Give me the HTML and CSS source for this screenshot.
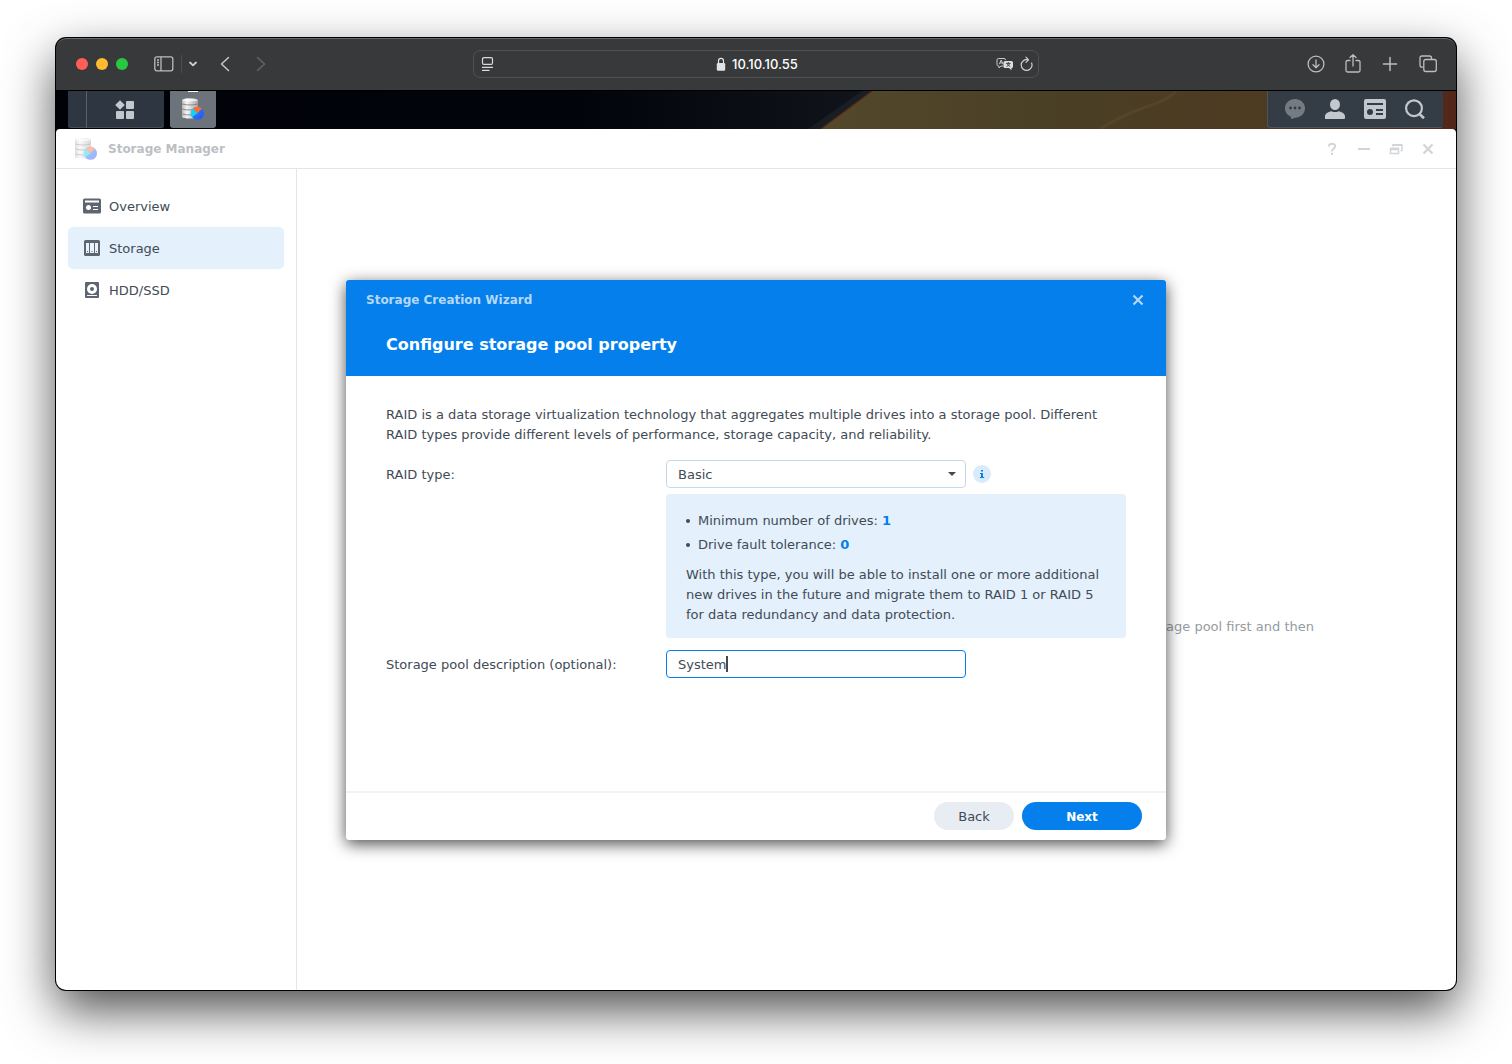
FILE: index.html
```html
<!DOCTYPE html>
<html lang="en">
<head>
<meta charset="utf-8">
<title>Storage Manager</title>
<link rel="stylesheet" href="styles.css">
</head>
<body>
<svg class="defs" aria-hidden="true">
  <defs>
    <linearGradient id="disk" x1="0" x2="1" y1="0" y2="0">
      <stop offset="0" stop-color="#b9b9b9"/><stop offset=".3" stop-color="#f4f4f4"/><stop offset="1" stop-color="#a6a6a6"/>
    </linearGradient>
    <linearGradient id="pie" x1="0" x2="1" y1="0" y2="1">
      <stop offset="0" stop-color="#3b86ff"/><stop offset="1" stop-color="#1d55f0"/>
    </linearGradient>
    <symbol id="storage-manager" viewBox="0 0 22 22">
      <path d="M0 2C0-.2 16-.2 16 2V5.500C16 6 15.600 6.300 15.600 6.500C15.600 6.700 16 7 16 7.500V10.500C16 11 15.600 11.300 15.600 11.500C15.600 11.700 16 12 16 12.500V19C16 21 0 21 0 19V12.500C0 12 .4 11.700.4 11.500C.4 11.300 0 11 0 10.500V7.500C0 7 .4 6.700.4 6.500C.4 6.300 0 6 0 5.500Z" fill="url(#disk)"/>
      <ellipse cx="8" cy="2.200" rx="7.500" ry="1.200" fill="#fff" opacity=".7"/>
      <path d="M.2 5.800C2 7.300 14 7.300 15.800 5.800M.2 10.800C2 12.300 14 12.300 15.800 10.800M.2 15.800C2 17.300 14 17.300 15.800 15.800" fill="none" stroke="#777" stroke-width=".8"/>
      <circle cx="15.500" cy="15.300" r="6.500" fill="url(#pie)"/>
      <path d="M15.500 15.300L11 10.600A6.500 6.500 0 0 0 10.100 19Z" fill="#12d3f3"/>
      <path d="M15.500 15.300L11 10.600A6.500 6.500 0 0 1 19.800 10.400Z" fill="#ff6d2d"/>
    </symbol>
    <symbol id="panel" viewBox="0 0 22 20">
      <path fill-rule="evenodd" d="M2 0H20Q22 0 22 2V18Q22 20 20 20H2Q0 20 0 18V2Q0 0 2 0ZM3 4V6H19V4ZM6 10A3 3 0 1 0 6 16A3 3 0 1 0 6 10ZM12 10V12H19V10ZM12 14V16H19V14Z"/>
    </symbol>
  </defs>
</svg>

<div class="browser">
  <header class="toolbar">
    <div class="toolbar-left">
      <div class="lights"><i class="red"></i><i class="yellow"></i><i class="green"></i></div>
      <button class="tool" aria-label="Sidebar"><svg width="20" height="16" viewBox="0 0 20 16" fill="none" stroke="#bdbdbe" stroke-width="1.300"><rect x=".8" y=".8" width="18" height="14" rx="2"/><path d="M7 1V15M3 4H5M3 6.500H5M3 9H5"/></svg></button>
      <button class="tool drop" aria-label="Tab groups"><svg width="10" height="6" viewBox="0 0 10 6" fill="none" stroke="#d0d0d1" stroke-width="1.800" stroke-linecap="round" stroke-linejoin="round"><path d="M2 1.500L5 4.300L8 1.500"/></svg></button>
      <button class="tool" aria-label="Back page"><svg width="10" height="16" viewBox="0 0 10 16" fill="none" stroke="#c8c8c9" stroke-width="1.500" stroke-linecap="round" stroke-linejoin="round"><path d="M8.500 1.500L1.500 8L8.500 14.500"/></svg></button>
      <button class="tool forward" aria-label="Forward page"><svg width="10" height="16" viewBox="0 0 10 16" fill="none" stroke="#626364" stroke-width="1.500" stroke-linecap="round" stroke-linejoin="round"><path d="M1.500 1.500L8.500 8L1.500 14.500"/></svg></button>
    </div>
    <div class="address">
      <svg width="13" height="16" viewBox="0 0 13 16" fill="none" stroke="#dadadb" stroke-width="1.200" stroke-linecap="round"><rect x="1.500" y="1.600" width="10" height="6.800" rx="1.500"/><path d="M1.500 11.400H11.500M1.500 14.400H8"/></svg>
      <div class="address-host">
        <svg width="10" height="14" viewBox="0 0 10 14"><path d="M2.500 6.500V4A2.500 2.700 0 0 1 7.500 4V6.500" fill="none" stroke="#e2e2e2" stroke-width="1.200"/><rect x=".8" y="6" width="8.400" height="7.800" rx="1.200" fill="#e2e2e2"/></svg>
        <span>10.10.10.55</span>
      </div>
      <div class="address-tools">
        <svg width="18" height="14" viewBox="0 0 18 14"><path d="M7.500 9H5L3 11V9H2.500Q1 9 1 7.500V3Q1 1.500 2.500 1.500H8Q9.500 1.500 9.500 3" fill="none" stroke="#c9c9ca"/><path d="M3.300 7.300L5.200 3L7.100 7.300M4 5.900H6.500" fill="none" stroke="#c9c9ca"/><path d="M9 4H15.500Q17 4 17 5.500V9.500Q17 11 15.500 11V13.200L13 11H9Q7.500 11 7.500 9.500V5.500Q7.500 4 9 4Z" fill="#dedede"/><path d="M10 6.400H14.600M12.300 5V6.400M10.500 9.500Q13 8.800 13.800 6.500M11 6.500Q12 8.800 14.200 9.500" fill="none" stroke="#38393a" stroke-width=".9"/></svg>
        <svg width="13" height="16" viewBox="0 0 13 16" fill="none" stroke="#d0d0d1" stroke-width="1.200" stroke-linecap="round" stroke-linejoin="round"><path d="M11.600 7A5.400 5.400 0 1 1 7.500 3.700M6 1.200L8.500 3.800L6 6.300"/></svg>
      </div>
    </div>
    <div class="toolbar-right">
      <button class="tool" aria-label="Downloads"><svg width="18" height="18" viewBox="0 0 18 18" fill="none" stroke="#bdbdbe" stroke-width="1.300" stroke-linecap="round" stroke-linejoin="round"><circle cx="9" cy="9" r="7.900"/><path d="M9 5V12.500M6 9.800L9 12.700L12 9.800"/></svg></button>
      <button class="tool" aria-label="Share"><svg width="18" height="20" viewBox="0 0 18 20" fill="none" stroke="#bdbdbe" stroke-width="1.300" stroke-linecap="round" stroke-linejoin="round"><path d="M6 6.500H3.500Q2 6.500 2 8V16.500Q2 18 3.500 18H14.500Q16 18 16 16.500V8Q16 6.500 14.500 6.500H12M9 12V1M6 3.600L9 .8L12 3.600"/></svg></button>
      <button class="tool" aria-label="New tab"><svg width="18" height="18" viewBox="0 0 18 18" stroke="#bdbdbe" stroke-width="1.500" stroke-linecap="round"><path d="M9 2.500V15.500M2.500 9H15.500"/></svg></button>
      <button class="tool" aria-label="Tab overview"><svg width="20" height="18" viewBox="0 0 20 18" fill="none" stroke="#bdbdbe" stroke-width="1.300"><path d="M5.500 12.200H4Q2 12.200 2 10.200V3Q2 1 4 1H11.500Q13.500 1 13.500 3V4.500"/><rect x="5.800" y="4.500" width="12.500" height="12" rx="2"/></svg></button>
    </div>
  </header>

  <nav class="taskbar">
    <svg class="wallpaper" viewBox="0 0 1400 38" preserveAspectRatio="none" aria-hidden="true">
      <defs>
        <linearGradient id="night" x1="0" x2="1" y1="0" y2="0"><stop offset="0" stop-color="#010208"/><stop offset=".6" stop-color="#02040c"/><stop offset="1" stop-color="#14171d"/></linearGradient>
        <linearGradient id="sand" x1="0" x2="1" y1="0" y2="0"><stop offset="0" stop-color="#54482b"/><stop offset=".35" stop-color="#4a4026"/><stop offset=".7" stop-color="#4d3a21"/><stop offset="1" stop-color="#522719"/></linearGradient>
      </defs>
      <rect width="870" height="38" fill="url(#night)"/>
      <path d="M806 0L752 38H765L816 0Z" fill="#20262b" opacity=".6"/>
      <path d="M816 0H1400V38H765Z" fill="url(#sand)"/>
      <path d="M816 0L765 38" stroke="#5a2716" stroke-width="1.200"/>
      <path d="M1044 38Q1066 24 1090 16T1120 0" fill="none" stroke="#665433" opacity=".35" stroke-width="3"/>
    </svg>
    <div class="menu-group">
      <button class="menu-button" aria-label="Main menu"><svg width="20" height="20" viewBox="0 0 20 20" fill="#c3c8cf"><path d="M5 .2L9.800 5L5 9.800L.2 5Z"/><rect x="11" y="1" width="8" height="8" rx="1"/><rect x="1" y="11" width="8" height="8" rx="1"/><rect x="11" y="11" width="8" height="8" rx="1"/></svg></button>
    </div>
    <button class="app-button" aria-label="Storage Manager"><svg width="22" height="22"><use href="#storage-manager"/></svg></button>
    <div class="tray">
      <button aria-label="Chat"><svg width="20" height="20" viewBox="0 0 20 20"><path d="M10 0C15.600 0 20 4 20 9.200C20 14 16 18 11.500 18.500L6 20V17.700C2.400 16.300 0 13 0 9.200C0 4 4.400 0 10 0Z" fill="#747b83"/><g fill="#343c45"><circle cx="5.500" cy="9" r="1.400"/><circle cx="10" cy="9" r="1.400"/><circle cx="14.500" cy="9" r="1.400"/></g></svg></button>
      <button aria-label="Account"><svg width="20" height="20" viewBox="0 0 20 20" fill="#c3c8cf"><path d="M10 0A5 5.500 0 0 1 10 11A5 5.500 0 0 1 10 0ZM0 20V17.500C0 14.500 3 13 6.500 12.200Q10 14 13.500 12.200C17 13 20 14.500 20 17.500V19Q20 20 19 20Z"/></svg></button>
      <button aria-label="Widgets"><svg width="22" height="20" fill="#c3c8cf"><use href="#panel"/></svg></button>
      <button aria-label="Search"><svg width="20" height="20" viewBox="0 0 20 20" fill="none" stroke="#c3c8cf" stroke-width="2.200"><circle cx="9" cy="9.200" r="7.900"/><path d="M14.500 15L19 19.300" stroke-width="2.600"/></svg></button>
    </div>
  </nav>

  <div class="app">
    <div class="app-title">
      <svg class="faded" width="22" height="22"><use href="#storage-manager"/></svg>
      <span class="app-name">Storage Manager</span>
      <div class="app-controls">
        <button aria-label="Help"><svg width="14" height="14" viewBox="0 0 14 14" fill="none" stroke="#d2d5d8" stroke-width="2"><path d="M3.800 4.500C3.800.8 10.200.8 10.200 4.300C10.200 6.500 7 6.500 7 9.500"/><path d="M7 10.800V13"/></svg></button>
        <button aria-label="Minimize"><svg width="14" height="14" viewBox="0 0 14 14" stroke="#d2d5d8" stroke-width="2"><path d="M1 7H13"/></svg></button>
        <button aria-label="Restore"><svg width="14" height="14" viewBox="0 0 14 14" fill="none" stroke="#d2d5d8"><path d="M4 4.500V3H13V8.500H11.500" stroke-width="1.500"/><path d="M3.500 3H13" stroke-width="2"/><path d="M1 7H10" stroke-width="2.500"/><rect x="1.500" y="6.500" width="8" height="5" stroke-width="1.500"/></svg></button>
        <button aria-label="Close window"><svg width="14" height="14" viewBox="0 0 14 14" stroke="#d2d5d8" stroke-width="2.200"><path d="M2.500 2.500L11.500 11.500M11.500 2.500L2.500 11.500"/></svg></button>
      </div>
    </div>
    <div class="app-body">
      <aside class="sidebar">
        <a class="side-item" href="#overview"><svg width="18" height="16" viewBox="0 0 18 16"><path d="M1.500.5H16.500Q18 .5 18 2V14Q18 15.500 16.500 15.500H1.500Q0 15.500 0 14V2Q0 .5 1.500.5Z" fill="#5d6670"/><path d="M2 2.500H16V4.500H2ZM10 8H15V9H10ZM10 11H15V12H10Z" fill="#fff"/><circle cx="5.500" cy="9.500" r="2.500" fill="#fff"/></svg>Overview</a>
        <a class="side-item current" href="#storage"><svg width="18" height="16" viewBox="0 0 18 16"><rect x="1" y="0" width="16" height="16" rx="1.500" fill="#5d6670"/><path d="M3 3H6V13H3ZM7 3H11V13H7ZM12 3H15V13H12Z" fill="#e9f3fc"/><path d="M4 11.500H5M8.500 11.500H9.500M13 11.500H14" stroke="#5d6670"/></svg>Storage</a>
        <a class="side-item" href="#drives"><svg width="18" height="16" viewBox="0 0 18 16"><rect x="2" y="0" width="14" height="16" rx="1" fill="#5d6670"/><circle cx="9" cy="7" r="5" fill="#fff"/><circle cx="9" cy="7" r="2" fill="#5d6670"/><path d="M4 13.500H14" stroke="#fff"/></svg>HDD/SSD</a>
      </aside>
      <main class="content"><p>storage pool first and then</p></main>
    </div>

    <div class="overlay">
      <form class="dialog" role="dialog" aria-labelledby="wizard-title">
        <header class="dialog-head">
          <div class="dialog-bar">
            <span id="wizard-title">Storage Creation Wizard</span>
            <button type="button" aria-label="Close"><svg width="12" height="12" viewBox="0 0 12 12" stroke="#b4d8f9" stroke-width="2.200"><path d="M1.500 1.500L10.500 10.500M10.500 1.500L1.500 10.500"/></svg></button>
          </div>
          <h1>Configure storage pool property</h1>
        </header>
        <div class="dialog-body">
          <p class="intro">RAID is a data storage virtualization technology that aggregates multiple drives into a storage pool. Different RAID types provide different levels of performance, storage capacity, and reliability.</p>
          <div class="field">
            <label for="raid">RAID type:</label>
            <div class="field-value">
              <div class="select-line">
                <select id="raid"><option>Basic</option></select>
                <button type="button" class="info" aria-label="About RAID types"><svg width="18" height="18" viewBox="0 0 18 18"><circle cx="9" cy="9" r="9" fill="#d9eafb"/><path d="M8 5H10V6.600H8ZM7 8H10V12H11.200V13H6.800V12H8V9H7Z" fill="#057feb"/></svg></button>
              </div>
              <div class="note">
                <ul>
                  <li>Minimum number of drives: <b>1</b></li>
                  <li>Drive fault tolerance: <b>0</b></li>
                </ul>
                <p>With this type, you will be able to install one or more additional new drives in the future and migrate them to RAID 1 or RAID 5 for data redundancy and data protection.</p>
              </div>
            </div>
          </div>
          <div class="field">
            <label for="desc">Storage pool description (optional):</label>
            <div class="field-value"><div class="text-box"><input id="desc" type="text" value="System"></div></div>
          </div>
        </div>
        <footer class="dialog-foot">
          <button type="button" class="back">Back</button>
          <button type="submit" class="next">Next</button>
        </footer>
      </form>
    </div>
  </div>
</div>
</body>
</html>
```
FILE: styles.css
```css
* { box-sizing: border-box; }

body {
  margin: 0;
  min-height: 100vh;
  padding: 38px 56px 74px;
  display: flex;
  background: #fff;
  color: #414b55;
  font: 13px/20px Verdana, "DejaVu Sans", sans-serif;
}

p, ul, h1 { margin: 0; padding: 0; }
svg { display: block; flex: none; }
button { padding: 0; border: 0; background: none; font: inherit; color: inherit; }
.defs { position: absolute; width: 0; height: 0; }

.browser {
  flex: 1;
  min-width: 0;
  display: flex;
  flex-direction: column;
  border-radius: 10px;
  overflow: hidden;
  background: #000;
  box-shadow: 0 0 0 1px #000, 0 20px 50px rgba(0, 0, 0, .7);
}

/* Browser toolbar */
.toolbar {
  display: grid;
  grid-template-columns: 1fr minmax(0, 566px) 1fr;
  align-items: center;
  height: 53px;
  background: #38393a;
  border-bottom: 1px solid #000;
  border-radius: 10px 10px 0 0;
  box-shadow: inset 0 1px #6a6a6b;
}
.toolbar-left, .toolbar-right, .lights, .address, .address-host, .address-tools { display: flex; align-items: center; }
.toolbar-left { padding-left: 20px; }
.lights { gap: 8px; margin-right: 26px; }
.lights i { width: 12px; height: 12px; border-radius: 50%; }
.red { background: #ff5f57; }
.yellow { background: #febc2e; }
.green { background: #28c840; }
.drop { margin: 0 22px 0 7px; padding: 6px 0 6px 6px; border-left: 1px solid #4b4c4d; }
.forward { margin-left: 26px; }
.toolbar-right { justify-content: flex-end; gap: 19px; padding-right: 18px; }
.address {
  justify-content: space-between;
  height: 28px;
  padding: 0 5px 0 7px;
  border: 1px solid #505152;
  border-radius: 7px;
}
.address-host { gap: 6px; margin-left: 24px; color: #fff; font: 500 13px/16px Inter, sans-serif; }
.address-tools { gap: 6px; }

/* Desktop task bar */
.taskbar { position: relative; display: flex; height: 38px; padding: 0 13px 0 12px; }
.wallpaper { position: absolute; width: 100%; height: 100%; left: 0; top: 0; }
.menu-group, .app-button, .tray { position: relative; height: 37px; border-radius: 0 0 3px 3px; }
.menu-group { display: flex; width: 96px; padding-left: 18px; background: #2e3641; box-shadow: inset 0 -1px #444b55; }
.menu-button { flex: 1; display: grid; place-items: center; padding-right: 2px; border-left: 1px solid #59606a; }
.app-button { width: 46px; margin-left: 6px; padding-bottom: 1px; background: #6d737b; display: grid; place-items: center; }
.app-button::before { content: ""; position: absolute; top: 0; left: 18px; width: 10px; height: 1px; background: #fff; }
.tray { display: flex; margin-left: auto; padding: 0 8px; background: #343c45; box-shadow: inset 1px -1px #4b535b; }
.tray button { width: 40px; display: grid; place-items: center; padding-bottom: 1px; }

/* Application window */
.app { position: relative; flex: 1; display: flex; flex-direction: column; background: #fff; border-radius: 4px 4px 0 0; }
.app-title { display: flex; align-items: center; height: 40px; padding: 0 12px 0 19px; border-bottom: 1px solid #dfe6ec; }
.faded { opacity: .45; }
.app-name { margin-left: 11px; color: #bcbfc3; font-size: 12px; font-weight: bold; }
.app-controls { display: flex; margin-left: auto; }
.app-controls button { width: 32px; display: grid; place-items: center; }
.app-body { flex: 1; display: flex; }
.sidebar { flex: none; width: 241px; padding: 16px 12px; border-right: 1px solid #dfe6ec; }
.side-item {
  display: flex;
  align-items: center;
  gap: 8px;
  height: 42px;
  padding: 2px 0 0 15px;
  border-radius: 5px;
  color: #414b55;
  text-decoration: none;
}
.side-item svg { margin-bottom: 2px; }
.current { background: #e4f0fc; }
.content { flex: 1; padding: 448px 142px 0 0; text-align: right; color: #969ba0; }

/* Wizard */
.overlay { position: absolute; inset: 1px 0 0; display: flex; align-items: center; justify-content: center; }
.dialog {
  display: flex;
  flex-direction: column;
  width: 820px;
  max-width: 100%;
  min-height: 560px;
  background: #fff;
  border-radius: 3px;
  overflow: hidden;
  box-shadow: 0 4px 16px rgba(0, 0, 0, .7);
}
.dialog-head { height: 96px; background: #057feb; color: #fff; }
.dialog-bar { display: flex; align-items: center; justify-content: space-between; height: 40px; padding: 0 22px 0 20px; color: #b4d8f9; font-size: 12px; font-weight: bold; }
h1 { padding: 13px 40px 0; font-size: 16px; line-height: 24px; }
.dialog-body { flex: 1; padding: 29px 40px; }
.intro { margin-bottom: 15px; }
.field { display: flex; align-items: flex-start; margin-bottom: 12px; }
.field label { flex: none; width: 280px; line-height: 30px; }
.field-value { flex: 1; }
.select-line { display: flex; align-items: center; gap: 7px; }
select, input {
  display: block;
  width: 300px;
  height: 28px;
  padding: 0 11px;
  border: 1px solid #c9d7e3;
  border-radius: 4px;
  color: #414b55;
  font: inherit;
  outline: 0;
}
select {
  appearance: none;
  padding-top: 2px;
  background: #fff;
}
.select-line, .text-box { position: relative; }
.select-line::after {
  content: "";
  position: absolute;
  left: 282px;
  top: 12px;
  border: 4px solid transparent;
  border-top-color: #414b55;
  border-bottom: 0;
  pointer-events: none;
}
input { background: #fff; border-color: #057feb; }
.text-box::after { content: ""; position: absolute; left: 60px; top: 6px; width: 2px; height: 16px; background: #414b55; }
.note { margin-top: 6px; padding: 15px 20px 13px; background: #e4f0fc; border-radius: 4px; }
.note ul { list-style: none; margin-bottom: 8px; }
.note li { display: flex; align-items: center; line-height: 24px; white-space: pre; }
.note li::before { content: ""; width: 4px; height: 4px; margin-right: 8px; border-radius: 50%; background: #414b55; }
.note b { color: #057feb; }
.dialog-foot { display: flex; justify-content: flex-end; gap: 8px; padding: 9px 24px 10px; border-top: 2px solid #f0f4f8; }
.dialog-foot button { height: 28px; padding-top: 2px; border-radius: 14px; }
.back { width: 80px; background: #e8edf4; }
.dialog-foot .next { width: 120px; background: #057feb; color: #fff; font-size: 12px; font-weight: bold; }
```
